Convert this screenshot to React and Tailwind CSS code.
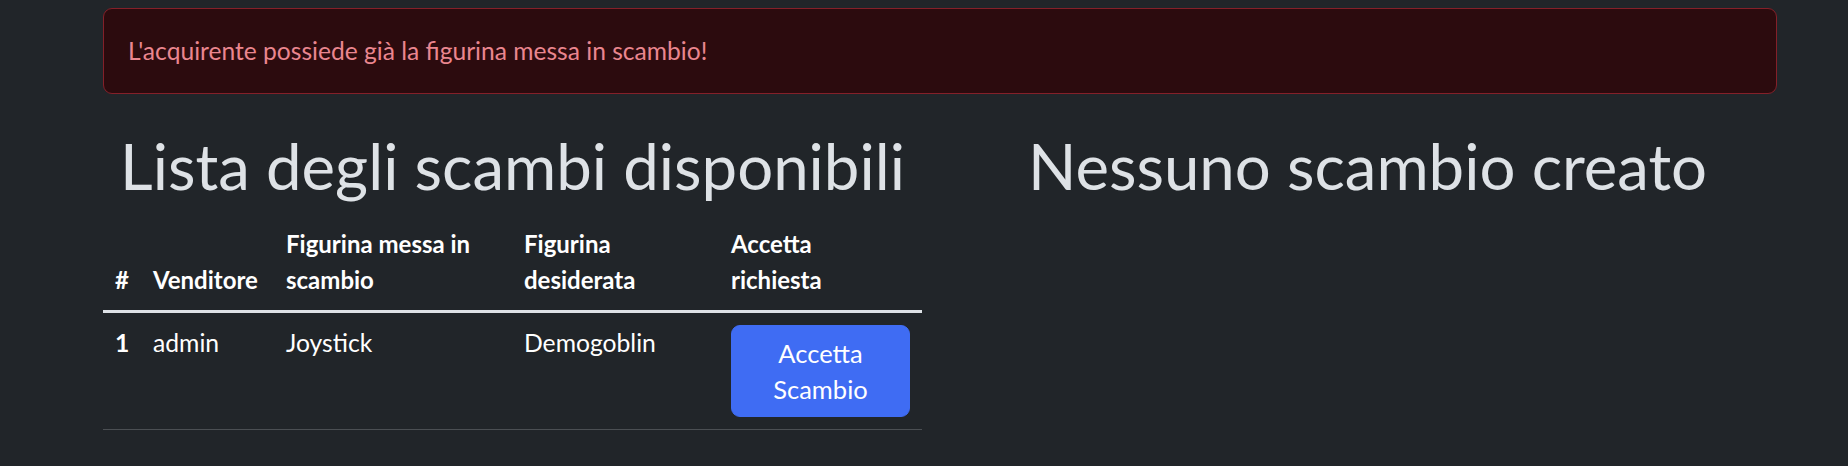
import React from 'react'

const trades = [
  { id: 1, seller: 'admin', offered: 'Joystick', wanted: 'Demogoblin' },
]

export default function App() {
  return (
    <div className="min-h-screen bg-[#212529] text-[#dee2e6] font-['Lato',sans-serif]">
      <div className="ml-[103px] w-[1674px] pt-[8px]">
        {/* Alert */}
        <div className="rounded-[9px] border border-[#842029] bg-[#2c0b0e] px-6 py-6 text-[24.6px] leading-9 text-[#ea868f]">
          L'acquirente possiede già la figurina messa in scambio!
        </div>

        <div className="mt-6 flex gap-[36px]">
          {/* Left column */}
          <div className="w-[819px]">
            <h1 className="mt-3 mb-3 text-center text-[63.5px] leading-[72px] font-normal">
              Lista degli scambi disponibili
            </h1>
            <table className="w-full table-fixed border-collapse text-left text-[24.7px] leading-9 text-white">
              <colgroup>
                <col className="w-[38px]" />
                <col className="w-[133px]" />
                <col className="w-[238px]" />
                <col className="w-[207px]" />
                <col className="w-[203px]" />
              </colgroup>
              <thead>
                <tr className="border-b-[3px] border-[#dee2e6] text-[24px]">
                  <th className="px-3 py-3 align-bottom font-bold">#</th>
                  <th className="px-3 py-3 align-bottom font-bold">Venditore</th>
                  <th className="px-3 py-3 align-bottom font-bold">Figurina messa in scambio</th>
                  <th className="px-3 py-3 align-bottom font-bold">Figurina desiderata</th>
                  <th className="px-3 py-3 align-bottom font-bold">
                    Accetta
                    <br />
                    richiesta
                  </th>
                </tr>
              </thead>
              <tbody>
                {trades.map((t) => (
                  <tr key={t.id} className="border-b border-[#4b4f53]">
                    <td className="px-3 py-3 align-top font-bold">{t.id}</td>
                    <td className="px-3 py-3 align-top">{t.seller}</td>
                    <td className="px-3 py-3 align-top">{t.offered}</td>
                    <td className="px-3 py-3 align-top">{t.wanted}</td>
                    <td className="px-3 py-3 align-top">
                      <button className="w-full rounded-[9px] border border-[#3f6cf3] bg-[#3f6cf3] px-[18px] py-[9px] text-center text-[25.5px] leading-9 text-white">
                        Accetta Scambio
                      </button>
                    </td>
                  </tr>
                ))}
              </tbody>
            </table>
          </div>

          {/* Right column */}
          <div className="w-[819px]">
            <h1 className="mt-3 mb-3 text-center text-[63.5px] leading-[72px] font-normal">
              Nessuno scambio creato
            </h1>
          </div>
        </div>
      </div>
    </div>
  )
}
